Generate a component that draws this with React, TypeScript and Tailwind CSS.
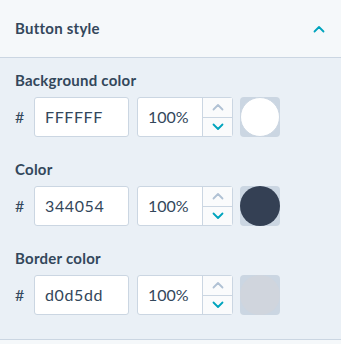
import React from 'react';

const rows = [
  { label: 'Background color', hex: 'FFFFFF', fill: 'bg-white border border-[#cbd6e2]' },
  { label: 'Color', hex: '344054', fill: 'bg-[#344054]' },
  { label: 'Border color', hex: 'd0d5dd', fill: 'bg-[#d0d5dd]' },
];

function Chevron({ up, className }: { up?: boolean; className?: string }) {
  return (
    <svg width="12" height="8" viewBox="0 0 12 8" className={className} fill="none">
      <path
        d={up ? 'M1.5 6.5 L6 2 L10.5 6.5' : 'M1.5 1.5 L6 6 L10.5 1.5'}
        stroke="currentColor"
        strokeWidth="1.8"
        strokeLinecap="round"
        strokeLinejoin="round"
      />
    </svg>
  );
}

function ColorRow({ label, hex, fill }: { label: string; hex: string; fill: string }) {
  return (
    <div className="pb-[22px]">
      <div className="h-[20px] leading-[20px] text-[15px] font-bold tracking-[0.25px] text-[#33475b]">{label}</div>
      <div className="mt-[7px] flex items-center h-[40px]">
        <span className="w-[19px] text-[16px] text-[#33475b]">#</span>
        <div className="w-[95px] h-[40px] bg-white border border-[#cbd6e2] rounded-[3px] flex items-center pl-[10px] text-[16px] tracking-[0.6px] text-[#33475b]">
          {hex}
        </div>
        <div className="ml-[8px] w-[96px] h-[40px] bg-white border border-[#cbd6e2] rounded-[3px] flex">
          <div className="flex-1 flex items-center pl-[10px] text-[16px] text-[#33475b]">100%</div>
          <div className="w-[30px] border-l border-[#cbd6e2] flex flex-col">
            <div className="flex-1 flex items-center justify-center border-b border-[#cbd6e2] bg-[#fafbfc]">
              <Chevron up className="text-[#b0c1d4]" />
            </div>
            <div className="flex-1 flex items-center justify-center bg-[#fafbfc]">
              <Chevron className="text-[#00a4bd]" />
            </div>
          </div>
        </div>
        <div className="ml-[7px] relative w-[40px] h-[40px] rounded-[4px] bg-[#cbd6e2]">
          <div className={`absolute inset-0 rounded-full ${fill}`} />
        </div>
      </div>
    </div>
  );
}

export default function App() {
  return (
    <div className="w-[341px] h-[344px] bg-[#f5f8fa]" style={{ fontFamily: 'Lato, "Open Sans", sans-serif' }}>
      <div className="h-[58px] flex items-center justify-between pl-[15px] pr-[16px] border-b border-[#cbd6e2] bg-[#f5f8fa]">
        <span className="text-[15px] font-bold tracking-[0.25px] text-[#33475b]">Button style</span>
        <Chevron up className="text-[#00a4bd]" />
      </div>
      <div className="bg-[#eaf0f6] pt-[12px] px-[15px] pb-[2px] border-b border-[#cbd6e2]">
        {rows.map((r) => (
          <ColorRow key={r.label} {...r} />
        ))}
      </div>
    </div>
  );
}
